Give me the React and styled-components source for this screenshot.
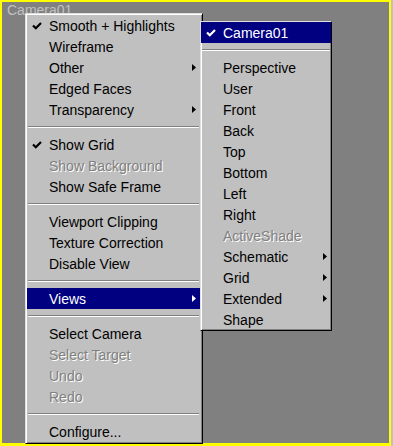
import React from 'react';
import styled, { createGlobalStyle } from 'styled-components';

const GlobalStyle = createGlobalStyle`
  html, body {
    margin: 0;
    padding: 0;
    background: #c0c0c0;
  }
  body {
    font-family: "Liberation Sans", Arial, sans-serif;
  }
`;

const mainItems = [
  { label: 'Smooth + Highlights', checked: true },
  { label: 'Wireframe' },
  { label: 'Other', sub: true },
  { label: 'Edged Faces' },
  { label: 'Transparency', sub: true },
  'sep',
  { label: 'Show Grid', checked: true },
  { label: 'Show Background', disabled: true },
  { label: 'Show Safe Frame' },
  'sep',
  { label: 'Viewport Clipping' },
  { label: 'Texture Correction' },
  { label: 'Disable View' },
  'sep',
  { label: 'Views', sub: true, active: true },
  'sep',
  { label: 'Select Camera' },
  { label: 'Select Target', disabled: true },
  { label: 'Undo', disabled: true },
  { label: 'Redo', disabled: true },
  'sep',
  { label: 'Configure...' },
];

const viewItems = [
  { label: 'Camera01', checked: true, active: true },
  'sep',
  { label: 'Perspective' },
  { label: 'User' },
  { label: 'Front' },
  { label: 'Back' },
  { label: 'Top' },
  { label: 'Bottom' },
  { label: 'Left' },
  { label: 'Right' },
  { label: 'ActiveShade', disabled: true },
  { label: 'Schematic', sub: true },
  { label: 'Grid', sub: true },
  { label: 'Extended', sub: true },
  { label: 'Shape' },
];

function MenuList({ items }) {
  return items.map((item, i) => {
    if (item === 'sep') {
      return (
        <Separator key={i}>
          <SepLine />
        </Separator>
      );
    }
    const color = item.active ? '#ffffff' : '#000000';
    return (
      <Item key={i} $active={item.active}>
        <CheckSlot>
          {item.checked && (
            <svg width="10" height="8" viewBox="0 0 10 8">
              <path d="M1 3.5 L3.8 6.3 L9 1" fill="none" stroke={color} strokeWidth="2.2" />
            </svg>
          )}
        </CheckSlot>
        <Label $disabled={item.disabled} $active={item.active}>{item.label}</Label>
        <ArrowSlot>
          {item.sub && (
            <svg width="4" height="7" viewBox="0 0 4 7">
              <path d="M0 0 L4 3.5 L0 7 Z" fill={color} />
            </svg>
          )}
        </ArrowSlot>
      </Item>
    );
  });
}

function App() {
  return (
    <>
      <GlobalStyle />
      <Viewport>
        <ViewLabel>Camera01</ViewLabel>
        <MainMenu>
          <MenuList items={mainItems} />
        </MainMenu>
        <SubMenu>
          <MenuList items={viewItems} />
        </SubMenu>
      </Viewport>
    </>
  );
}

const Viewport = styled.div`
  position: relative;
  box-sizing: border-box;
  width: 391px;
  height: 446px;
  background: #808080;
  border: 2px solid #ffff00;
  border-bottom-width: 3px;
`;

const ViewLabel = styled.div`
  font-size: 14px;
  line-height: 16px;
  color: #c0c0c0;
  padding-left: 5px;
`;

const MenuBox = styled.div`
  position: absolute;
  box-sizing: border-box;
  display: flex;
  flex-direction: column;
  background: #c0c0c0;
  border-style: solid;
  border-width: 1px;
  border-color: #dfdfdf #000000 #000000 #dfdfdf;
  box-shadow: inset 1px 1px 0 #ffffff, inset -1px -1px 0 #808080;
`;

const MainMenu = styled(MenuBox)`
  left: 23px;
  top: 11px;
  width: 178px;
  padding: 1px 2px 1px 1px;
`;

const SubMenu = styled(MenuBox)`
  left: 198px;
  top: 19px;
  width: 132px;
  padding: 0;
`;

const Item = styled.div`
  display: flex;
  align-items: center;
  height: 21px;
  background: ${p => (p.$active ? '#000080' : 'transparent')};
`;

const CheckSlot = styled.div`
  display: flex;
  align-items: center;
  width: 17px;
  padding-left: 5px;
`;

const Label = styled.span`
  flex: 1;
  font-size: 14px;
  white-space: nowrap;
  color: ${p => (p.$active ? '#ffffff' : p.$disabled ? '#808080' : '#000000')};
  text-shadow: ${p => (p.$disabled ? '1px 1px 0 #ffffff' : 'none')};
`;

const ArrowSlot = styled.div`
  display: flex;
  align-items: center;
  justify-content: center;
  width: 12px;
`;

const Separator = styled.div`
  display: flex;
  align-items: center;
  height: 14px;
  padding: 0 1px;
`;

const SepLine = styled.div`
  flex: 1;
  border-top: 1px solid #808080;
  border-bottom: 1px solid #ffffff;
`;

export default App;
